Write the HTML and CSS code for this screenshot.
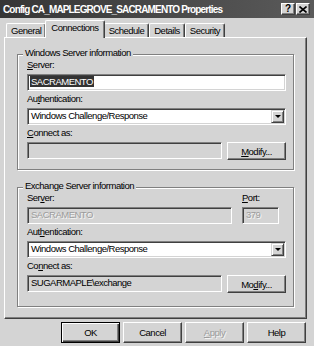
FILE: index.html
```html
<!DOCTYPE html>
<html lang="en">
<head>
    <meta charset="UTF-8">
    <title>Config CA_MAPLEGROVE_SACRAMENTO Properties</title>
    <link rel="stylesheet" href="styles.css">
</head>
<body>
    <div class="window">
        <div class="titlebar">
            <span class="title">Config CA_MAPLEGROVE_SACRAMENTO Properties</span>
            <div class="caption-buttons">
                <span class="cap-btn">?</span>
                <span class="cap-btn">
                    <svg width="8" height="7" viewBox="0 0 8 7"><path d="M0.5 0.5 L7.5 6.5 M7.5 0.5 L0.5 6.5" stroke="#000" stroke-width="1.6" fill="none"/></svg>
                </span>
            </div>
        </div>

        <div class="tabs">
            <div class="tab">General</div>
            <div class="tab active">Connections</div>
            <div class="tab">Schedule</div>
            <div class="tab">Details</div>
            <div class="tab">Security</div>
        </div>

        <div class="panel">
            <div class="group group-windows">
                <div class="group-title">Windows Server information</div>
                <div class="field">
                    <div class="field-label"><u>S</u>erver:</div>
                    <div class="textbox"><span class="selected">SACRAMENTO</span></div>
                </div>
                <div class="field">
                    <div class="field-label">Au<u>t</u>hentication:</div>
                    <div class="dropdown">
                        <span>Windows Challenge/Response</span>
                        <span class="drop-btn"></span>
                    </div>
                </div>
                <div class="field">
                    <div class="field-label"><u>C</u>onnect as:</div>
                    <div class="control-row">
                        <div class="textbox disabled"></div>
                        <div class="button modify"><u>M</u>odify...</div>
                    </div>
                </div>
            </div>

            <div class="group group-exchange">
                <div class="group-title">Exchange Server information</div>
                <div class="field server-row">
                    <div class="server-col">
                        <div class="field-label">Ser<u>v</u>er:</div>
                        <div class="textbox disabled">SACRAMENTO</div>
                    </div>
                    <div class="port-col">
                        <div class="field-label"><u>P</u>ort:</div>
                        <div class="textbox disabled">379</div>
                    </div>
                </div>
                <div class="field">
                    <div class="field-label">Aut<u>h</u>entication:</div>
                    <div class="dropdown">
                        <span>Windows Challenge/Response</span>
                        <span class="drop-btn"></span>
                    </div>
                </div>
                <div class="field">
                    <div class="field-label">Co<u>n</u>nect as:</div>
                    <div class="control-row">
                        <div class="textbox readonly">SUGARMAPLE\exchange</div>
                        <div class="button modify">Mo<u>d</u>ify...</div>
                    </div>
                </div>
            </div>
        </div>

        <div class="buttons">
            <div class="button default">OK</div>
            <div class="button">Cancel</div>
            <div class="button disabled"><u>A</u>pply</div>
            <div class="button">Help</div>
        </div>
    </div>
</body>
</html>
```

FILE: styles.css
```css
* {
    box-sizing: border-box;
}
body {
    margin: 0;
    background-color: #d4d4d4;
    font-family: "Liberation Sans", Arial, sans-serif;
    font-size: 9.5px;
    letter-spacing: -0.5px;
    color: #000;
}
.window {
    width: 314px;
    height: 346px;
    overflow: hidden;
    background-color: #d4d4d4;
}
.titlebar {
    height: 18px;
    display: flex;
    align-items: center;
    justify-content: space-between;
    padding: 0 4px 0 3px;
    background: linear-gradient(to right, #363636, #5a5a5a);
}
.title {
    color: #fff;
    font-weight: bold;
    font-size: 10px;
    letter-spacing: -0.85px;
    white-space: nowrap;
}
.caption-buttons {
    display: flex;
    gap: 1px;
}
.cap-btn {
    width: 14px;
    height: 12px;
    display: flex;
    align-items: center;
    justify-content: center;
    background-color: #d4d4d4;
    border: 1px solid;
    border-color: #fff #404040 #404040 #fff;
    box-shadow: inset -1px -1px #808080;
    font-weight: bold;
    font-size: 10px;
    line-height: 10px;
    letter-spacing: 0;
}

/* tabs */
.tabs {
    display: flex;
    align-items: flex-end;
    height: 19px;
    padding-left: 6px;
}
.tab {
    height: 14px;
    padding: 0 4px;
    line-height: 13px;
    border: 1px solid;
    border-color: #fff #404040 transparent #fff;
    border-bottom: none;
    border-radius: 2px 2px 0 0;
    box-shadow: inset -1px 0 #808080;
}
.tab.active {
    position: relative;
    z-index: 1;
    height: 18px;
    margin: 0 -1px -1px -1px;
    padding: 0 5px;
    line-height: 14px;
    background-color: #d4d4d4;
}

/* panel */
.panel {
    height: 282px;
    margin: 0 7px 0 4px;
    padding: 16px 12px 0 12px;
    border: 1px solid;
    border-color: #fff #404040 #404040 #fff;
    box-shadow: inset -1px -1px #808080;
}
.group {
    border: 1px solid #808080;
    box-shadow: inset 1px 1px #fff, 1px 1px #fff;
    padding: 0 7px 9px 9px;
}
.group-exchange {
    margin-top: 17px;
    padding-bottom: 13px;
}
.group-title {
    width: max-content;
    margin: -8px 0 -2px -4px;
    padding: 0 2px;
    line-height: 12px;
    background-color: #d4d4d4;
}
.field {
    margin-top: 2px;
}
.field-label {
    line-height: 12px;
    margin-bottom: 3px;
}

/* controls */
.textbox,
.dropdown {
    height: 17px;
    padding: 0 3px;
    line-height: 14px;
    background-color: #fff;
    border: 1px solid;
    border-color: #808080 #fff #fff #808080;
    box-shadow: inset 1px 1px #404040, inset -1px -1px #d4d4d4;
    white-space: nowrap;
    overflow: hidden;
}
.textbox.disabled,
.textbox.readonly {
    background-color: #d4d4d4;
}
.textbox.disabled {
    color: #9c9c9c;
    text-shadow: 1px 1px #f4f4f4;
}
.selected {
    background-color: #333;
    color: #fff;
    padding: 0 1px;
    margin-left: -1px;
}
.dropdown {
    display: flex;
    justify-content: space-between;
    padding-right: 1px;
}
.drop-btn {
    width: 13px;
    height: 13px;
    margin-top: 1px;
    display: flex;
    align-items: center;
    justify-content: center;
    background-color: #d4d4d4;
    border: 1px solid;
    border-color: #d4d4d4 #404040 #404040 #d4d4d4;
    box-shadow: inset 1px 1px #fff, inset -1px -1px #808080;
}
.drop-btn::after {
    content: "";
    border-left: 3px solid transparent;
    border-right: 3px solid transparent;
    border-top: 3px solid #000;
}
.control-row {
    display: flex;
    gap: 5px;
}
.control-row .textbox {
    flex: 1;
}
.server-row {
    display: flex;
}
.server-col {
    width: 205px;
}
.port-col {
    width: 37px;
    margin-left: 10px;
}

/* buttons */
.button {
    height: 18px;
    display: flex;
    align-items: center;
    justify-content: center;
    background-color: #d4d4d4;
    border: 1px solid;
    border-color: #fff #404040 #404040 #fff;
    box-shadow: inset -1px -1px #808080;
}
.button.modify {
    width: 59px;
}
.buttons {
    display: flex;
    justify-content: flex-end;
    gap: 3px;
    padding: 3px 8px 0 0;
}
.buttons .button {
    width: 59px;
    height: 21px;
}
.button.default {
    border-color: #000;
    box-shadow: inset 1px 1px #fff, inset -1px -1px #404040, inset -2px -2px #808080;
}
.button.disabled {
    color: #9c9c9c;
    text-shadow: 1px 1px #f4f4f4;
}
```
